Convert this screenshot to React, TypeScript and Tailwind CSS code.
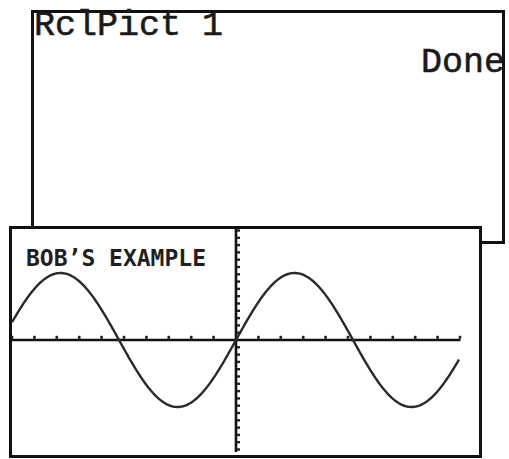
const CX = 236;
const CY = 340;

function Graph() {
  const pts: string[] = [];
  for (let x = 12; x <= 460; x += 1.5) {
    const y = CY - 67 * Math.sin(((x - CX) * Math.PI) / 117);
    pts.push(`${x.toFixed(1)},${y.toFixed(1)}`);
  }
  const xTicks: number[] = [];
  for (let k = -10; k <= 10; k++) if (k !== 0) xTicks.push(CX + k * 22.4);
  const yTicks: number[] = [];
  for (let y = CY - 7.3; y > 230; y -= 7.3) yTicks.push(y);
  for (let y = CY + 7.3; y < 452; y += 7.3) yTicks.push(y);

  return (
    <svg width="467" height="226" viewBox="12 229 467 226" className="block">
      <line x1="12" y1={CY} x2="460.5" y2={CY} stroke="#111" strokeWidth="2.6" />
      <line x1={CX} y1="229" x2={CX} y2="452" stroke="#111" strokeWidth="2.6" />
      {xTicks.map((x) => (
        <rect key={x} x={x - 1.3} y={CY - 4.2} width="2.6" height="3" fill="#222" />
      ))}
      {yTicks.map((y) => (
        <rect key={y} x={CX + 1} y={y - 1.2} width="3" height="2.4" fill="#222" />
      ))}
      <polyline points={pts.join(" ")} fill="none" stroke="#2a2a2a" strokeWidth="2.4" strokeLinejoin="round" />
    </svg>
  );
}

export default function App() {
  return (
    <div className="w-[509px] h-[459px] bg-white pt-[10px] overflow-hidden">
      <div className="ml-[31px] w-[474px] h-[234px] border-[3px] border-[#111] bg-white text-[#1a1a1a] font-['Liberation_Mono',monospace] font-normal text-[35px]">
        <div className="leading-[27px] whitespace-pre [-webkit-text-stroke:0.6px_#1a1a1a]">RclPict 1</div>
        <div className="mt-[10px] leading-[27px] text-right -mr-[3px] [-webkit-text-stroke:0.6px_#1a1a1a]">Done</div>
      </div>
      <div className="relative ml-[9px] -mt-[18px] w-[473px] h-[232px] border-[3px] border-[#111] bg-white">
        <Graph />
        <div className="absolute left-[14px] top-[18px] font-['DejaVu_Sans_Mono',monospace] font-bold text-[23px] leading-none text-[#1f1f1f] whitespace-pre">
          BOB’S EXAMPLE
        </div>
      </div>
    </div>
  );
}
